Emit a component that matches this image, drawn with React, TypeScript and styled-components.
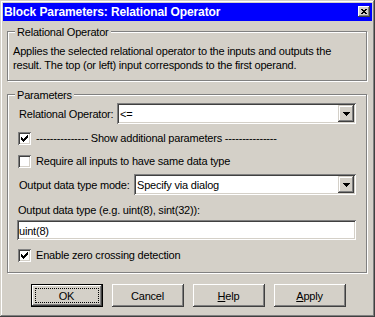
import React from 'react';
import styled, { createGlobalStyle } from 'styled-components';

const Global = createGlobalStyle`
  html, body { margin: 0; padding: 0; background: #D4D0C8; }
  body { font-family: "Liberation Sans", Arial, sans-serif; font-size: 11px; letter-spacing: -0.2px; color: #000; }
  * { box-sizing: border-box; }
`;

const Window = styled.div`
  width: 375px;
  height: 317px;
  padding: 3px;
  background: #d4d0c8;
  box-shadow: inset -1px -1px 0 #404040, inset 1px 1px 0 #d4d0c8,
    inset -2px -2px 0 #808080, inset 2px 2px 0 #ffffff;
  display: flex;
  flex-direction: column;
`;

const TitleBar = styled.div`
  height: 18px;
  background: #0000ff;
  display: flex;
  align-items: center;
  justify-content: space-between;
  padding: 0 2px 0 1px;
  color: #fff;
  font-weight: bold;
  font-size: 12px;
  letter-spacing: -0.1px;
  white-space: nowrap;
`;

const CloseButton = styled.div`
  width: 12px;
  height: 11px;
  background: #d4d0c8;
  box-shadow: inset -1px -1px 0 #404040, inset 1px 1px 0 #ffffff,
    inset -2px -2px 0 #808080;
  display: flex;
  align-items: center;
  justify-content: center;
  margin-top: -1px;
`;

const Body = styled.div`
  display: flex;
  flex-direction: column;
  padding: 10px 5px 0 4px;
`;

const GroupBox = styled.div<{ $mt?: number; $pad: string }>`
  position: relative;
  border: 1px solid #808080;
  box-shadow: inset 1px 1px 0 #ffffff, 1px 1px 0 #ffffff;
  margin-top: ${(p) => p.$mt ?? 0}px;
  padding: ${(p) => p.$pad};
  display: flex;
  flex-direction: column;
`;

const Legend = styled.span`
  position: absolute;
  top: -7px;
  left: 7px;
  padding: 0 2px;
  line-height: 14px;
  background: #d4d0c8;
  white-space: nowrap;
`;

const Description = styled.div`
  line-height: 14px;
  white-space: nowrap;
`;

const Row = styled.div<{ $mt?: number; $h: number }>`
  display: flex;
  align-items: center;
  height: ${(p) => p.$h}px;
  margin-top: ${(p) => p.$mt ?? 0}px;
  white-space: nowrap;
`;

const FieldLabel = styled.span<{ $w: number }>`
  width: ${(p) => p.$w}px;
  flex: none;
  padding-left: 2px;
`;

const PlainLabel = styled.span`
  padding-left: 1px;
`;

const sunken = `
  background: #ffffff;
  box-shadow: inset 1px 1px 0 #808080, inset -1px -1px 0 #ffffff,
    inset 2px 2px 0 #404040, inset -2px -2px 0 #d4d0c8;
`;

const Combo = styled.div`
  ${sunken}
  flex: 1;
  height: 21px;
  padding: 2px;
  display: flex;
  align-items: center;
`;

const ComboText = styled.span`
  flex: 1;
  padding-left: 1px;
`;

const DropButton = styled.div`
  width: 16px;
  height: 17px;
  background: #d4d0c8;
  box-shadow: inset -1px -1px 0 #404040, inset 1px 1px 0 #d4d0c8,
    inset -2px -2px 0 #808080, inset 2px 2px 0 #ffffff;
  display: flex;
  align-items: center;
  justify-content: center;
`;

const TextInput = styled.div<{ $mt?: number }>`
  ${sunken}
  height: 20px;
  margin-top: ${(p) => p.$mt ?? 0}px;
  padding: 2px 2px 0 2px;
  display: flex;
  align-items: center;
`;

const Check = styled.span`
  ${sunken}
  width: 13px;
  height: 13px;
  flex: none;
  margin-left: 1px;
  margin-right: 5px;
  display: flex;
  align-items: center;
  justify-content: center;
`;

const ButtonRow = styled.div`
  display: flex;
  justify-content: center;
  gap: 9px;
  margin-top: 11px;
  padding-left: 2px;
`;

const Button = styled.div<{ $default?: boolean }>`
  width: 72px;
  height: 23px;
  background: #d4d0c8;
  display: flex;
  align-items: stretch;
  justify-content: center;
  border: ${(p) => (p.$default ? '1px solid #000' : 'none')};
  box-shadow: inset -1px -1px 0 #404040, inset 1px 1px 0 #ffffff,
    inset -2px -2px 0 #808080, inset 2px 2px 0 #d4d0c8;
  padding: ${(p) => (p.$default ? '3px' : '4px')};
  color: #000;
`;

const ButtonFace = styled.span<{ $focus?: boolean }>`
  flex: 1;
  display: flex;
  align-items: center;
  justify-content: center;
  border: 1px dotted ${(p) => (p.$focus ? '#000' : 'transparent')};
  padding-top: 1px;
`;

const CheckMark = () => (
  <svg width="7" height="7" viewBox="0 0 7 7" shapeRendering="crispEdges">
    <path
      fill="#000"
      d="M6 0h1v1h-1z M5 1h2v1h-2z M0 2h1v1h-1z M4 2h3v1h-3z M0 3h2v1h-2z M3 3h3v1h-3z M0 4h5v1h-5z M1 5h3v1h-3z M2 6h1v1h-1z"
    />
  </svg>
);

const Arrow = () => (
  <svg width="7" height="4" viewBox="0 0 7 4" shapeRendering="crispEdges">
    <path fill="#000" d="M0 0H7V1H6V2H5V3H4V4H3V3H2V2H1V1H0Z" />
  </svg>
);

const CloseGlyph = () => (
  <svg width="6" height="5" viewBox="0 0 6 5" shapeRendering="crispEdges">
    <path
      fill="#000"
      d="M0 0h2v1h-2z M4 0h2v1h-2z M1 1h4v1h-4z M2 2h2v1h-2z M1 3h4v1h-4z M0 4h2v1h-2z M4 4h2v1h-2z"
    />
  </svg>
);

const CheckBox = ({ checked }: { checked?: boolean }) => (
  <Check>{checked && <CheckMark />}</Check>
);

export default function App() {
  return (
    <>
      <Global />
      <Window>
        <TitleBar>
          <span>Block Parameters: Relational Operator</span>
          <CloseButton>
            <CloseGlyph />
          </CloseButton>
        </TitleBar>
        <Body>
          <GroupBox $pad="12px 5px 8px 5px">
            <Legend>Relational Operator</Legend>
            <Description>
              Applies the selected relational operator to the inputs and outputs the
              <br />
              result. The top (or left) input corresponds to the first operand.
            </Description>
          </GroupBox>
          <GroupBox $mt={13} $pad="8px 10px 9px 9px">
            <Legend>Parameters</Legend>
            <Row $h={21}>
              <FieldLabel $w={100}>Relational Operator:</FieldLabel>
              <Combo>
                <ComboText>&lt;=</ComboText>
                <DropButton>
                  <Arrow />
                </DropButton>
              </Combo>
            </Row>
            <Row $h={16} $mt={6}>
              <CheckBox checked />
              <span>--------------- Show additional parameters ---------------</span>
            </Row>
            <Row $h={16} $mt={7}>
              <CheckBox />
              <span>Require all inputs to have same data type</span>
            </Row>
            <Row $h={21} $mt={5}>
              <FieldLabel $w={117}>Output data type mode:</FieldLabel>
              <Combo>
                <ComboText>Specify via dialog</ComboText>
                <DropButton>
                  <Arrow />
                </DropButton>
              </Combo>
            </Row>
            <Row $h={14} $mt={8}>
              <PlainLabel>Output data type (e.g. uint(8), sint(32)):</PlainLabel>
            </Row>
            <TextInput $mt={3}>uint(8)</TextInput>
            <Row $h={16} $mt={7}>
              <CheckBox checked />
              <span>Enable zero crossing detection</span>
            </Row>
          </GroupBox>
          <ButtonRow>
            <Button $default>
              <ButtonFace $focus>OK</ButtonFace>
            </Button>
            <Button>
              <ButtonFace>Cancel</ButtonFace>
            </Button>
            <Button>
              <ButtonFace>
                <u>H</u>elp
              </ButtonFace>
            </Button>
            <Button>
              <ButtonFace>
                <u>A</u>pply
              </ButtonFace>
            </Button>
          </ButtonRow>
        </Body>
      </Window>
    </>
  );
}
